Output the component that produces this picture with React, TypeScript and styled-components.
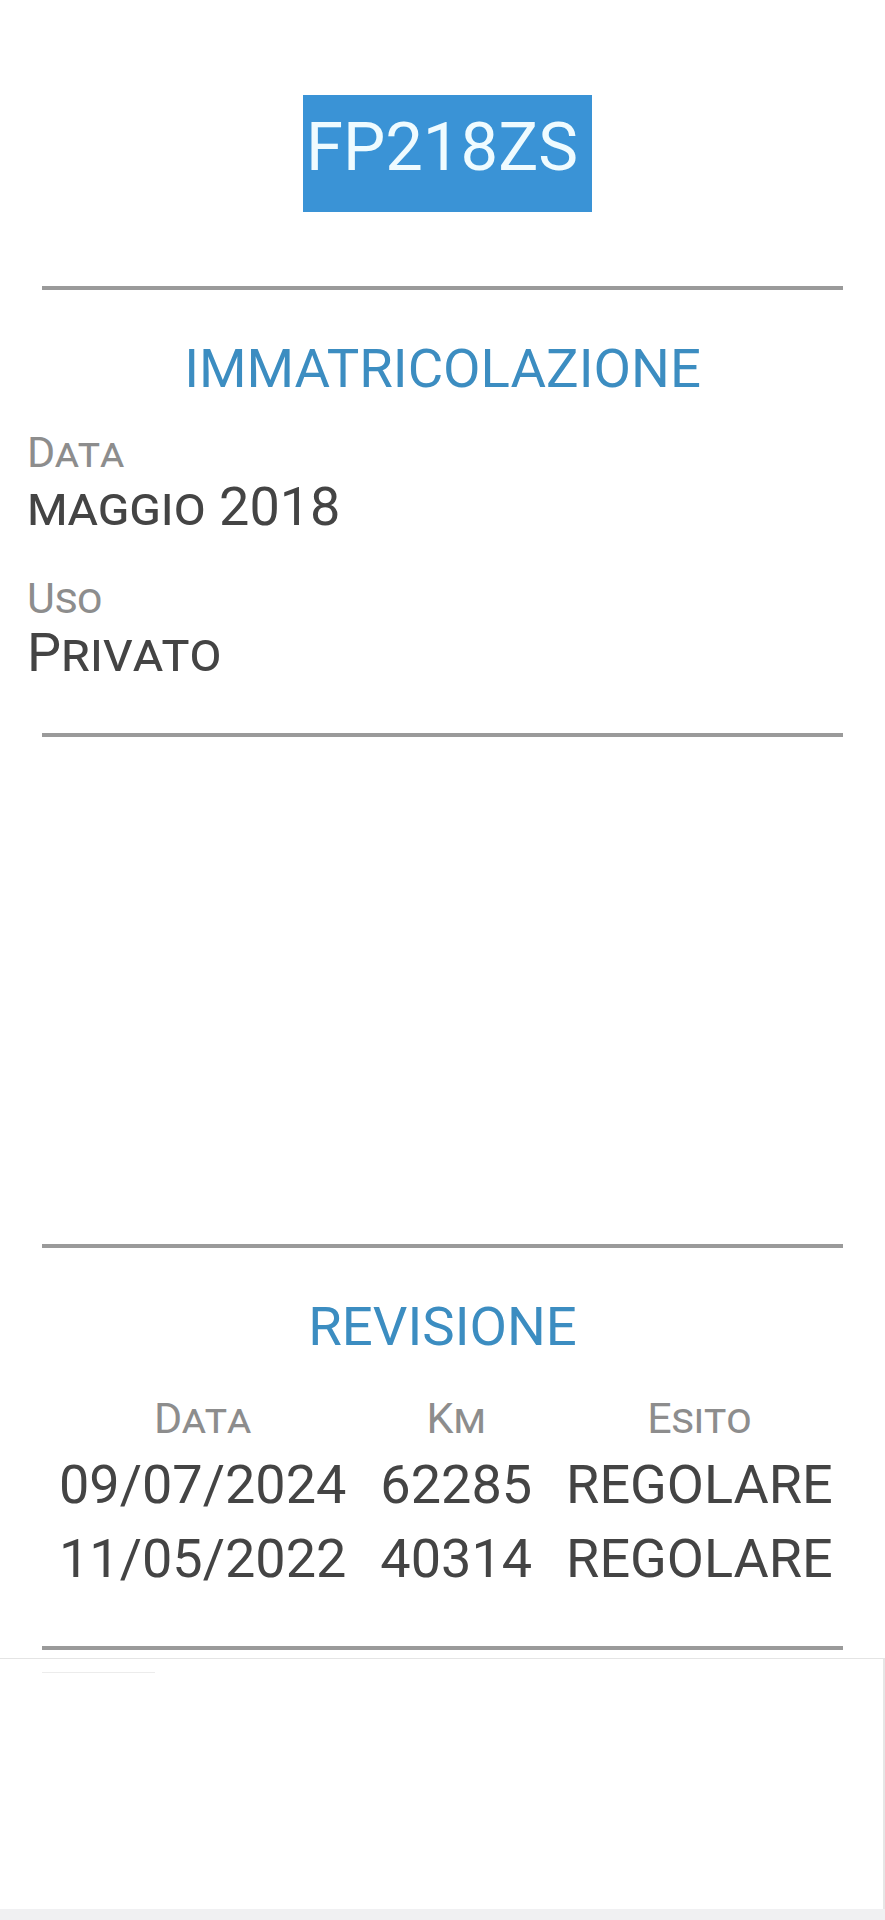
import React from "react"
import styled, { createGlobalStyle } from "styled-components"

const GlobalStyle = createGlobalStyle`
    html, body {
        margin: 0;
        padding: 0;
        background: #ffffff;
    }
    body {
        font-family: Roboto, "Noto Sans", Arial, sans-serif;
        width: 885px;
    }
`

const Pagina = styled.div`
    display: flex;
    flex-direction: column;
    min-height: 1920px;
    background: #ffffff;
`

const Contenuto = styled.div`
    padding: 0 42px;
`

const TargaContainer = styled.div`
    display: flex;
    justify-content: center;
    padding-top: 95px;
    padding-left: 10px;
`

const Targa = styled.span`
    background: #3a93d6;
    color: #effbff;
    font-size: 67px;
    line-height: 79px;
    padding: 13px 14px 25px 3px;
`

const Divisore = styled.hr<{ $spazioSopra: number }>`
    border: none;
    height: 4px;
    background: #9a9a9a;
    margin: ${(p) => p.$spazioSopra}px 0 0 0;
`

const Titolo = styled.h2<{ $spazioSopra: number }>`
    margin: ${(p) => p.$spazioSopra}px 0 0 0;
    text-align: center;
    font-weight: 400;
    font-size: 54.5px;
    line-height: 66px;
    color: #3c8dc1;
`

const Campi = styled.div`
    display: flex;
    flex-direction: column;
    gap: 36px;
    margin-top: 27px;
    padding-left: 27px;
    margin-left: -42px;
`

const Campo = styled.div`
    display: flex;
    flex-direction: column;
`

const Etichetta = styled.div`
    font-variant: small-caps;
    font-size: 43px;
    line-height: 48px;
    color: #8d8d8d;
`

const Valore = styled.div`
    font-variant: small-caps;
    font-size: 54px;
    line-height: 62px;
    color: #444444;
`

const Spaziatore = styled.div`
    height: 507px;
`

const Tabella = styled.table`
    margin: 35px auto 0 auto;
    border-collapse: collapse;
`

const Intestazione = styled.th`
    padding: 0 17px 6px 17px;
    font-weight: 400;
    font-variant: small-caps;
    font-size: 43px;
    line-height: 48px;
    color: #8d8d8d;
    text-align: center;
`

const Cella = styled.td`
    padding: 0 17px;
    font-size: 54px;
    line-height: 74px;
    color: #444444;
    text-align: center;
    white-space: nowrap;
`

const Riquadro = styled.div`
    margin-top: 8px;
    height: 250px;
    border-top: 1px solid #e4e4e4;
    border-right: 2px solid #e6e6e6;
    background: #ffffff;
`

const LineaTenue = styled.div`
    margin: 13px 0 0 42px;
    width: 113px;
    height: 1px;
    background: #ececec;
`

const Fondo = styled.div`
    flex: 1;
    background: #f0f0f2;
`

const revisioni = [
    { data: "09/07/2024", km: "62285", esito: "REGOLARE" },
    { data: "11/05/2022", km: "40314", esito: "REGOLARE" },
]

export default function App() {
    return (
        <Pagina>
            <GlobalStyle />
            <TargaContainer>
                <Targa>FP218ZS</Targa>
            </TargaContainer>
            <Contenuto>
                <Divisore $spazioSopra={74} />
                <Titolo $spazioSopra={45}>IMMATRICOLAZIONE</Titolo>
                <Campi>
                    <Campo>
                        <Etichetta>Data</Etichetta>
                        <Valore>maggio 2018</Valore>
                    </Campo>
                    <Campo>
                        <Etichetta>Uso</Etichetta>
                        <Valore>Privato</Valore>
                    </Campo>
                </Campi>
                <Divisore $spazioSopra={49} />
                <Spaziatore />
                <Divisore $spazioSopra={0} />
                <Titolo $spazioSopra={45}>REVISIONE</Titolo>
                <Tabella>
                    <thead>
                        <tr>
                            <Intestazione>Data</Intestazione>
                            <Intestazione>Km</Intestazione>
                            <Intestazione>Esito</Intestazione>
                        </tr>
                    </thead>
                    <tbody>
                        {revisioni.map((r) => (
                            <tr key={r.data}>
                                <Cella>{r.data}</Cella>
                                <Cella>{r.km}</Cella>
                                <Cella>{r.esito}</Cella>
                            </tr>
                        ))}
                    </tbody>
                </Tabella>
                <Divisore $spazioSopra={50} />
            </Contenuto>
            <Riquadro>
                <LineaTenue />
            </Riquadro>
            <Fondo />
        </Pagina>
    )
}
